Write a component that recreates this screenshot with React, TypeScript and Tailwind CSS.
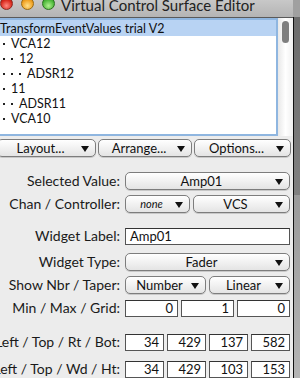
import React from 'react';

const font = { fontFamily: 'Lato, "Open Sans", sans-serif' };

const listItems = [
  { dots: 1, name: 'VCA12' },
  { dots: 2, name: '12' },
  { dots: 3, name: 'ADSR12' },
  { dots: 1, name: '11' },
  { dots: 2, name: 'ADSR11' },
  { dots: 1, name: 'VCA10' },
];

const Arrow = () => (
  <svg className="absolute right-[6px] top-[6px]" width="8" height="6" viewBox="0 0 8 6">
    <path d="M0 0 H8 L4 6 Z" fill="#111" />
  </svg>
);

const PopUp = ({ label, className = '', italic = false }: { label: string; className?: string; italic?: boolean }) => (
  <div
    className={`relative flex h-[18px] items-center justify-center rounded-[5px] border border-[#7d7d7d] bg-gradient-to-b from-white to-[#e4e4e4] text-[13px] leading-[16px] text-[#111] shadow-[0_1px_0_rgba(0,0,0,0.15)] ${className}`}
  >
    <span className={italic ? 'pr-3 text-[11px] italic' : 'pr-3'}>{label}</span>
    <Arrow />
  </div>
);

const Field = ({ value, align = 'right', className = '' }: { value: string; align?: 'left' | 'right'; className?: string }) => (
  <div
    className={`flex h-[17px] items-center border border-[#555] border-t-[#333] bg-white px-[4px] text-[13px] leading-[15px] text-[#111] ${
      align === 'right' ? 'justify-end' : 'justify-start'
    } ${className}`}
  >
    {value}
  </div>
);

const Row = ({ label, children, className = '' }: { label: string; children: React.ReactNode; className?: string }) => (
  <div className={`flex h-[18px] items-center ${className}`}>
    <div className="flex h-[18px] w-[120px] shrink-0 justify-end">
      <span className="shrink-0 whitespace-nowrap text-[14px] leading-[18px] text-[#1a1a1a]">{label}</span>
    </div>
    <div className="ml-[5px] flex w-[165px] items-center gap-[3px]">{children}</div>
  </div>
);

export default function App() {
  return (
    <div className="flex h-[378px] w-[300px] overflow-hidden bg-[#ececec]" style={font}>
      <div className="flex w-[293px] flex-col">
        {/* title bar */}
        <div className="flex h-[17px] shrink-0 items-start overflow-hidden bg-gradient-to-b from-[#c8c8c8] to-[#b4b4b4]">
          <div className="mt-[-3px] h-[13px] w-[13px] rounded-full border border-[#8a2a22] bg-[radial-gradient(circle_at_50%_70%,#ff8a80,#d8281c_60%,#a01a10)]" />
          <div className="mt-[-3px] ml-[8px] h-[13px] w-[13px] rounded-full border border-[#9a6a10] bg-[radial-gradient(circle_at_50%_70%,#ffe08a,#f0a020_60%,#b87010)]" />
          <div className="mt-[-3px] ml-[8px] h-[13px] w-[13px] rounded-full border border-[#2a7020] bg-[radial-gradient(circle_at_50%_70%,#b0f090,#4cb83a_60%,#2a8020)]" />
          <div className="mt-[-4px] ml-[6px] whitespace-nowrap text-[15px] leading-[18px] text-[#222]">Virtual Control Surface Editor</div>
        </div>
        {/* list */}
        <div className="flex h-[119px] shrink-0 border-t border-[#5a5a5a]">
          <div className="flex-1 border-[2px] border-l-0 border-[#8fb6e0] bg-white text-[12.5px] leading-[15px] text-[#111]">
            <div className="bg-[#b8d3f3] pt-[1px] leading-[15px]">TransformEventValues trial V2</div>
            {listItems.map((item, i) => (
              <div key={i} className="flex h-[15px] items-center">
                <span className="flex">
                  {Array.from({ length: item.dots }).map((_, j) => (
                    <span key={j} className="ml-[3px] mr-[3px] inline-block h-[2px] w-[2px] bg-[#222]" />
                  ))}
                </span>
                <span className="ml-[3px]">{item.name}</span>
              </div>
            ))}
          </div>
          <div className="relative w-[15px] bg-gradient-to-r from-[#e8e8e8] via-white to-[#f0f0f0]">
            <div className="absolute left-[4px] top-[3px] h-[22px] w-[7px] rounded-full bg-[#7e7e7e]" />
          </div>
        </div>
        {/* toolbar buttons */}
        <div className="mt-[3px] flex gap-[2px] pr-[2px]">
          <PopUp label="Layout..." className="ml-[-3px] w-[99px]" />
          <PopUp label="Arrange..." className="w-[94px]" />
          <PopUp label="Options..." className="w-[97px]" />
        </div>

        <Row label="Selected Value:" className="mt-[15px]">
          <PopUp label="Amp01" className="flex-1" />
        </Row>
        <Row label="Chan / Controller:" className="mt-[5px]">
          <PopUp label="none" italic className="w-[65px]" />
          <PopUp label="VCS" className="flex-1" />
        </Row>
        <Row label="Widget Label:" className="mt-[14px]">
          <Field value="Amp01" align="left" className="flex-1" />
        </Row>
        <Row label="Widget Type:" className="mt-[8px]">
          <PopUp label="Fader" className="flex-1" />
        </Row>
        <Row label="Show Nbr / Taper:" className="mt-[5px]">
          <PopUp label="Number" className="w-[81px]" />
          <PopUp label="Linear" className="flex-1" />
        </Row>
        <Row label="Min / Max / Grid:" className="mt-[5px]">
          <Field value="0" className="flex-1" />
          <Field value="1" className="flex-1" />
          <Field value="0" className="flex-1" />
        </Row>
        <Row label="Left / Top / Rt / Bot:" className="mt-[16px]">
          <Field value="34" className="flex-1" />
          <Field value="429" className="flex-1" />
          <Field value="137" className="flex-1" />
          <Field value="582" className="flex-1" />
        </Row>
        <Row label="Left / Top / Wd / Ht:" className="mt-[9px]">
          <Field value="34" className="flex-1" />
          <Field value="429" className="flex-1" />
          <Field value="103" className="flex-1" />
          <Field value="153" className="flex-1" />
        </Row>
      </div>
      {/* window edge and desktop */}
      <div className="flex w-[7px] flex-col">
        <div className="h-[17px] bg-[#a0a0a0]" />
        <div className="flex flex-1">
          <div className="w-[1px] bg-[#111]" />
          <div className="flex flex-1 flex-col">
            <div className="h-[178px] bg-gradient-to-b from-[#6c6c6c] to-[#808080]" />
            <div className="flex-1 bg-gradient-to-b from-[#9a9a9a] to-[#b4b4b4]" />
          </div>
        </div>
      </div>
    </div>
  );
}
